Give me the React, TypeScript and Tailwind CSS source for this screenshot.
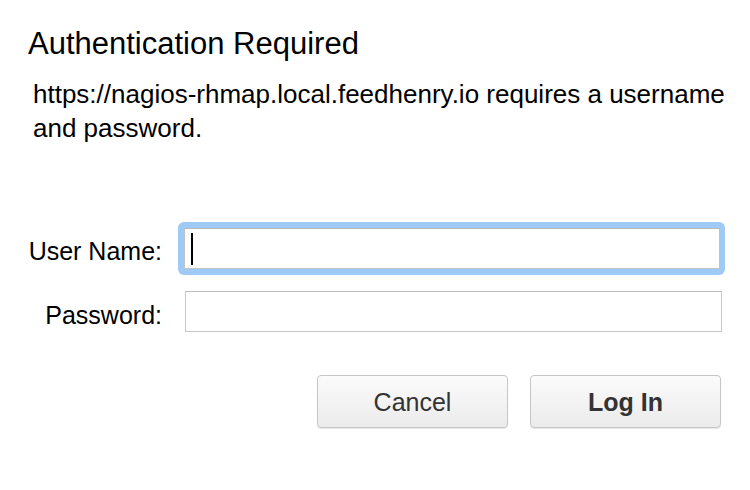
import React from "react";

export default function App() {
  return (
    <main
      className="w-[750px] h-[490px] bg-white text-black overflow-hidden"
      style={{ fontFamily: '"Liberation Sans", Arial, sans-serif' }}
    >
      <div className="pl-[28px] pt-[26px]">
        <h1 className="text-[31px] leading-[36px] font-normal">Authentication Required</h1>
        <p className="mt-[15px] pl-[5px] pr-[20px] text-[26px] leading-[34px]">
          https://nagios-rhmap.local.feedhenry.io requires a username and password.
        </p>
      </div>

      {/* form */}
      <div className="mt-[77px] flex flex-col gap-[16px]">
        <div className="flex items-center">
          <label className="w-[162px] pt-[4px] text-right text-[25px] leading-[30px]">User Name:</label>
          <div className="ml-[16px] w-[547px] rounded-[6px] bg-[#9fcaf6] pl-[6px] pr-[5px] pt-[6px] pb-[6px]">
            <div className="h-[41px] bg-white border border-[#c2c2c2] border-t-[#b8b8b8] flex items-center pl-[6px]">
              <span className="w-[2px] h-[32px] bg-black" />
            </div>
          </div>
        </div>
        <div className="flex items-center">
          <label className="w-[162px] pt-[6px] text-right text-[25px] leading-[30px]">Password:</label>
          <div className="ml-[23px] w-[537px] h-[41px] bg-white border border-[#c6c6c6] border-t-[#bcbcbc]" />
        </div>
      </div>

      <div className="mt-[43px] flex justify-end gap-[22px] pr-[29px]">
        <button className="w-[191px] h-[53px] pt-[2px] rounded-[4px] border border-[#c6c6c6] bg-gradient-to-b from-[#fbfbfb] to-[#ebebeb] shadow-[0_1px_1px_rgba(0,0,0,0.1)] text-[25px] text-[#333]">
          Cancel
        </button>
        <button className="w-[191px] h-[53px] pt-[2px] rounded-[4px] border border-[#c6c6c6] bg-gradient-to-b from-[#fbfbfb] to-[#ebebeb] shadow-[0_1px_1px_rgba(0,0,0,0.1)] text-[25px] font-bold text-[#333]">
          Log In
        </button>
      </div>
    </main>
  );
}
